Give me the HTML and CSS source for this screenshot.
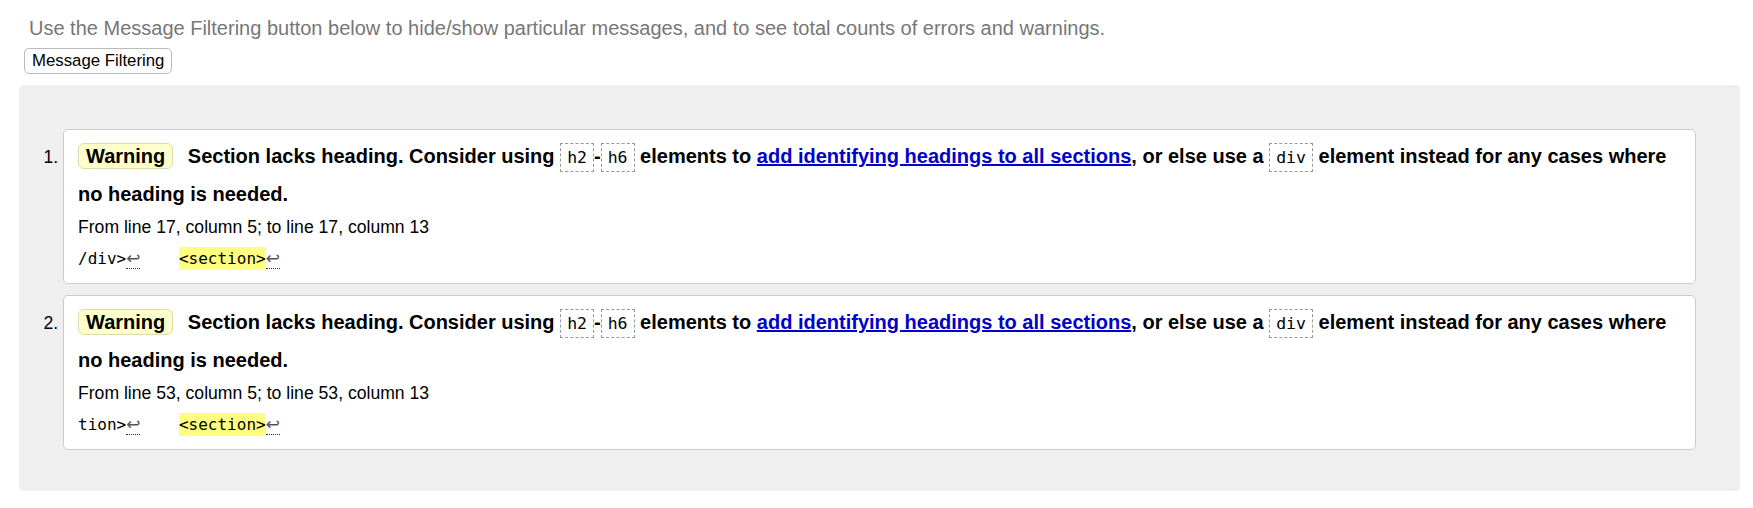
FILE: index.html
```html
<!DOCTYPE html>
<html lang="en">
<head>
<meta charset="utf-8">
<title>Validator results</title>
<link rel="stylesheet" href="styles.css">
</head>
<body>
<p class="intro">Use the Message Filtering button below to hide/show particular messages, and to see total counts of errors and warnings.</p>
<button class="filter-btn" type="button">Message Filtering</button>
<div class="results">
  <ol class="messages">
    <li class="msg">
      <p class="title"><strong class="badge">Warning</strong> Section lacks heading. Consider using <code class="tag">h2</code>-<code class="tag">h6</code> elements to <a class="link" href="#">add identifying headings to all sections</a>, or else use a <code class="tag">div</code> element instead for any cases where no heading is needed.</p>
      <p class="location">From line 17, column 5; to line 17, column 13</p>
      <p class="extract"><code class="src">/div><span class="lf">↩</span>    <span class="hl">&lt;section&gt;</span><span class="lf">↩</span></code></p>
    </li>
    <li class="msg">
      <p class="title"><strong class="badge">Warning</strong> Section lacks heading. Consider using <code class="tag">h2</code>-<code class="tag">h6</code> elements to <a class="link" href="#">add identifying headings to all sections</a>, or else use a <code class="tag">div</code> element instead for any cases where no heading is needed.</p>
      <p class="location">From line 53, column 5; to line 53, column 13</p>
      <p class="extract"><code class="src">tion><span class="lf">↩</span>    <span class="hl">&lt;section&gt;</span><span class="lf">↩</span></code></p>
    </li>
  </ol>
</div>
</body>
</html>
```

FILE: styles.css
```css
html, body {
  margin: 0;
  padding: 0;
  background: #fff;
}

body {
  font-family: "Liberation Sans", Arial, sans-serif;
  color: #000;
  padding: 0 13px 0 19px;
}

.intro {
  margin: 0;
  padding: 17px 0 0 10px;
  font-size: 20px;
  line-height: 23px;
  color: #777;
}

.filter-btn {
  display: block;
  margin: 8px 0 0 5px;
  padding: 2px 7px;
  font-family: "Liberation Sans", Arial, sans-serif;
  font-size: 16.8px;
  line-height: 20px;
  color: #000;
  background: #fff;
  border: 1px solid #bbb;
  border-radius: 5px;
}

.results {
  margin-top: 11px;
  background: #efefef;
  border-radius: 5px;
  padding: 44px 0 41px;
}

.messages {
  margin: 0;
  padding: 0 44px;
  list-style: decimal outside;
}

.msg {
  font-size: 17.6px;
  background: #fff;
  border: 1px solid #ccc;
  border-radius: 5px;
  padding: 8px 14px 12px;
}

.msg + .msg {
  margin-top: 11px;
}

.title {
  margin: 0;
  font-size: 20px;
  font-weight: bold;
  line-height: 37px;
}

.badge {
  display: inline-block;
  line-height: 22px;
  padding: 1px 7px;
  margin-right: 9px;
  background: #ffffcc;
  border: 1px solid #dcdcaa;
  border-radius: 6px;
}

.tag {
  font-family: "DejaVu Sans Mono", "Liberation Mono", monospace;
  font-size: 16.5px;
  font-weight: normal;
  padding: 4px 6px;
  border: 1px dashed #999;
}

.link {
  color: #0000cc;
  text-decoration: underline;
}

.location {
  margin: 3px 0 0;
  font-size: 17.6px;
  line-height: 22px;
}

.extract {
  margin: 8px 0 0;
  line-height: 24px;
}

.src {
  font-family: "DejaVu Sans Mono", "Liberation Mono", monospace;
  font-size: 16px;
  white-space: pre;
}

.hl {
  background: #ffff80;
  padding: 2px 0;
}

.lf {
  font-family: "DejaVu Sans", sans-serif;
  font-size: 17px;
  color: #555;
  border-bottom: 1px dotted #333;
}
```
